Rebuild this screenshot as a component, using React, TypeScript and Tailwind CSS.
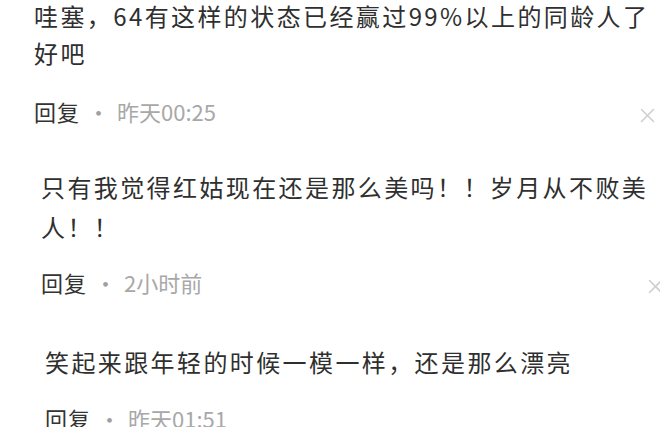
import React from "react";

function CloseIcon({ className }: { className: string }) {
  return (
    <svg className={className} width="15" height="15" viewBox="0 0 15 15" fill="none">
      <path d="M1.5 1.5l12 12M13.5 1.5l-12 12" stroke="#cfcfcf" strokeWidth="1.6" strokeLinecap="round" />
    </svg>
  );
}

function ReplyRow({ time, className, closeClass }: { time: string; className: string; closeClass: string }) {
  return (
    <div className={`flex items-center h-[30px] text-[22px] leading-[30px] ${className}`}>
      <span className="text-[#333] tracking-[1px]">回复</span>
      <span className="inline-block w-[37px] text-center text-[#a0a0a0]">·</span>
      <span className="text-[#a8a8a8]">{time}</span>
      <CloseIcon className={`ml-auto shrink-0 ${closeClass}`} />
    </div>
  );
}

export default function App() {
  return (
    <div className="w-[660px] h-[427px] overflow-hidden bg-white text-[#2f2f2f] font-['Noto_Sans_CJK_SC','Noto_Sans',sans-serif]">
      <div className="pl-[34px] -mt-[3px]">
        <p className="w-[620px] text-[24px] leading-[37px] tracking-[2.4px]">
          哇塞，64有这样的状态已经赢过99%以上的同龄人了好吧
        </p>
        <ReplyRow time="昨天00:25" className="mt-[25px]" closeClass="mr-[5px] mt-[8px]" />
      </div>

      <div className="pl-[41px] mt-[41px]">
        <p className="w-[612px] text-[24px] leading-[40px] tracking-[2.4px]">
          只有我觉得红姑现在还是那么美吗！！岁月从不败美人！！
        </p>
        <ReplyRow time="2小时前" className="mt-[20px]" closeClass="-mr-[3px] mt-[9px]" />
      </div>

      <div className="pl-[45px] mt-[46px]">
        <p className="w-[600px] text-[24px] leading-[38px] tracking-[2.4px]">
          笑起来跟年轻的时候一模一样，还是那么漂亮
        </p>
        <ReplyRow time="昨天01:51" className="mt-[22px]" closeClass="-mr-[20px]" />
      </div>
    </div>
  );
}
